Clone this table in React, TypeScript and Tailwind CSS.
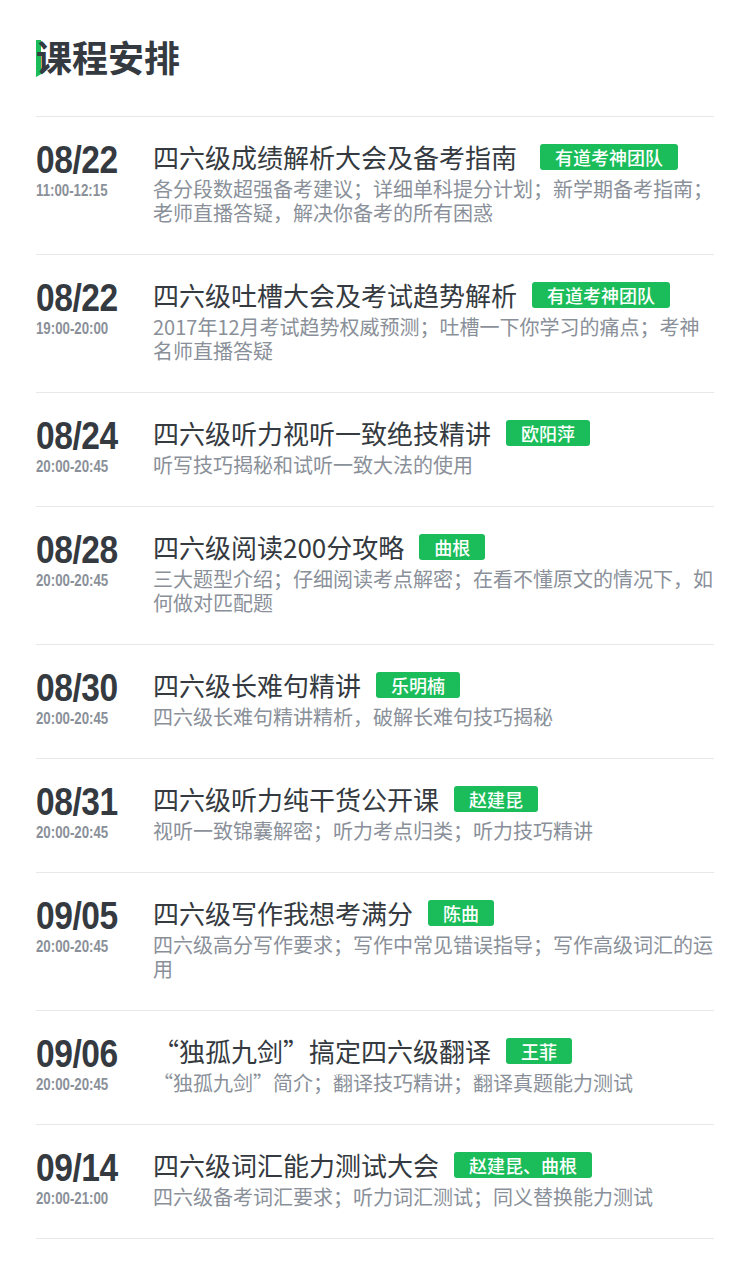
import React from 'react';

const courses = [
  {
    date: '08/22',
    time: '11:00-12:15',
    title: '四六级成绩解析大会及备考指南',
    teacher: '有道考神团队',
    desc: '各分段数超强备考建议；详细单科提分计划；新学期备考指南；老师直播答疑，解决你备考的所有困惑',
    extra: true,
  },
  {
    date: '08/22',
    time: '19:00-20:00',
    title: '四六级吐槽大会及考试趋势解析',
    teacher: '有道考神团队',
    desc: '2017年12月考试趋势权威预测；吐槽一下你学习的痛点；考神名师直播答疑',
  },
  {
    date: '08/24',
    time: '20:00-20:45',
    title: '四六级听力视听一致绝技精讲',
    teacher: '欧阳萍',
    desc: '听写技巧揭秘和试听一致大法的使用',
  },
  {
    date: '08/28',
    time: '20:00-20:45',
    title: '四六级阅读200分攻略',
    teacher: '曲根',
    desc: '三大题型介绍；仔细阅读考点解密；在看不懂原文的情况下，如何做对匹配题',
  },
  {
    date: '08/30',
    time: '20:00-20:45',
    title: '四六级长难句精讲',
    teacher: '乐明楠',
    desc: '四六级长难句精讲精析，破解长难句技巧揭秘',
  },
  {
    date: '08/31',
    time: '20:00-20:45',
    title: '四六级听力纯干货公开课',
    teacher: '赵建昆',
    desc: '视听一致锦囊解密；听力考点归类；听力技巧精讲',
  },
  {
    date: '09/05',
    time: '20:00-20:45',
    title: '四六级写作我想考满分',
    teacher: '陈曲',
    desc: '四六级高分写作要求；写作中常见错误指导；写作高级词汇的运用',
  },
  {
    date: '09/06',
    time: '20:00-20:45',
    title: '“独孤九剑”搞定四六级翻译',
    teacher: '王菲',
    desc: '“独孤九剑”简介；翻译技巧精讲；翻译真题能力测试',
  },
  {
    date: '09/14',
    time: '20:00-21:00',
    title: '四六级词汇能力测试大会',
    teacher: '赵建昆、曲根',
    desc: '四六级备考词汇要求；听力词汇测试；同义替换能力测试',
  },
];

const cjk = "font-['Noto_Sans_CJK_SC',sans-serif]";
const num = "font-['Liberation_Sans',Arial,sans-serif]";

export default function App() {
  return (
    <div className={`w-[750px] bg-white px-[36px] pb-[40px] ${cjk}`}>
      {/* Header */}
      <div className="relative pt-[34px] pb-[38px]">
        <svg className="absolute left-0 top-[40px]" width="10" height="37" viewBox="0 0 10 37">
          <polygon points="0,0 5,0 5,28 9,32 0,37" fill="#1bbd5a" />
        </svg>
        <h1 className="relative text-[36px] leading-[44px] font-bold text-[#343a40]">课程安排</h1>
      </div>

      <div className="border-t border-[#e8e8e8]">
        {courses.map((c, i) => (
          <div key={i} className="flex border-b border-[#e8e8e8] pt-[24px] pb-[29px]">
            <div className="w-[117px] shrink-0">
              <div className={`${num} h-[38px] text-[39px] leading-[38px] font-bold text-[#343a40] tracking-[-0.5px] origin-left scale-x-[0.86] whitespace-nowrap`}>
                {c.date}
              </div>
              <div className={`${num} mt-[2px] text-[17px] leading-[20px] font-bold text-[#8a9099] origin-left scale-x-[0.78] whitespace-nowrap`}>
                {c.time}
              </div>
            </div>
            <div className="flex-1 min-w-0">
              <div className="flex items-center gap-[15px] h-[32px]">
                <span className={`text-[26px] leading-[32px] text-[#343a40] whitespace-nowrap ${c.extra ? 'mr-[8px]' : ''}`}>
                  {c.title}
                </span>
                <span className="h-[26px] px-[15px] rounded-[3px] bg-[#1bbd5a] text-white text-[18px] leading-[26px] font-medium whitespace-nowrap">
                  {c.teacher}
                </span>
              </div>
              <p className="mt-[4px] text-[20px] leading-[24px] text-[#8a9099]">{c.desc}</p>
            </div>
          </div>
        ))}
      </div>
    </div>
  );
}
